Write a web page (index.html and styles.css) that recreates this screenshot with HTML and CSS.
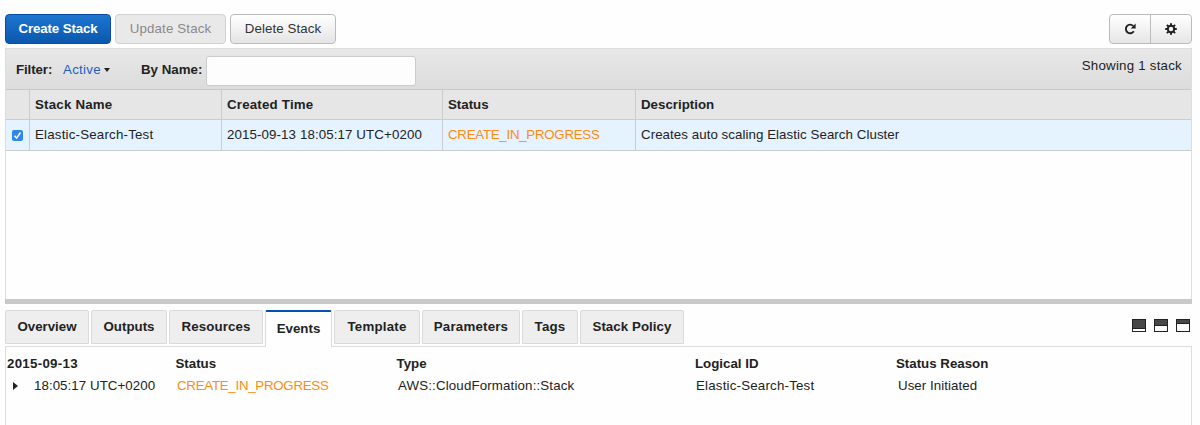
FILE: index.html
```html
<!DOCTYPE html>
<html lang="en">
<head>
<meta charset="utf-8">
<title>CloudFormation stacks</title>
<link rel="stylesheet" href="styles.css">
</head>
<body>
<main class="console">
  <header class="toolbar">
    <button class="btn primary">Create Stack</button>
    <button class="btn disabled">Update Stack</button>
    <button class="btn">Delete Stack</button>
    <div class="tools">
      <button class="tool" aria-label="Refresh"><svg width="14" height="14" viewBox="0 0 14 14"><path d="M10.2 3.9A4.3 4.3 0 1 0 10.8 9.3" fill="none" stroke="#222" stroke-width="1.9"/><path d="M12.6 1.6V6.4H7.7z" fill="#222"/></svg></button>
      <button class="tool" aria-label="Settings"><svg width="14" height="14" viewBox="0 0 14 14"><circle cx="7" cy="7" r="3.2" fill="none" stroke="#222" stroke-width="2"/><path d="M7 1.2V3.4M7 10.6v2.2M1.2 7h2.2M10.6 7h2.2M2.9 2.9l1.5 1.5M9.6 9.6l1.5 1.5M2.9 11.1l1.5-1.5M9.6 4.4l1.5-1.5" stroke="#222" stroke-width="2"/></svg></button>
    </div>
  </header>
  <section class="stacks">
    <div class="filter">
      <b class="filter-label">Filter:</b>
      <a class="active-link">Active</a><i class="caret"></i>
      <b class="name-label">By Name:</b>
      <input class="name-input" type="text" aria-label="By Name">
      <span class="count">Showing 1 stack</span>
    </div>
    <div class="row head">
      <div class="cell check"></div><div class="cell"><span class="wide">Stack Name</span></div><div class="cell"><span class="wide">Created Time</span></div><div class="cell"><span>Status</span></div><div class="cell"><span>Description</span></div>
    </div>
    <div class="row selected">
      <div class="cell check"><span class="checkbox"><svg width="11" height="11" viewBox="0 0 11 11"><path d="M2.5 5.8l2.1 2.3L8.5 2.5" fill="none" stroke="#fff" stroke-width="1.5"/></svg></span></div><div class="cell"><span class="t-name">Elastic-Search-Test</span></div><div class="cell"><span class="t-time">2015-09-13 18:05:17 UTC+0200</span></div><div class="cell"><span class="progress">CREATE_IN_PROGRESS</span></div><div class="cell"><span class="t-desc">Creates auto scaling Elastic Search Cluster</span></div>
    </div>
  </section>
  <div class="splitter"></div>
  <nav class="tabs">
    <a class="tab overview">Overview</a><a class="tab outputs">Outputs</a><a class="tab resources">Resources</a><a class="tab current">Events</a><a class="tab template">Template</a><a class="tab parameters">Parameters</a><a class="tab tags">Tags</a><a class="tab policy">Stack Policy</a>
    <div class="layouts"><i class="layout low"></i><i class="layout mid"></i><i class="layout high"></i></div>
  </nav>
  <section class="events">
    <div class="event event-head"><span class="date">2015-09-13</span><span>Status</span><span>Type</span><span>Logical ID</span><span>Status Reason</span></div>
    <div class="event event-item"><span class="when"><i class="expand"></i><span class="t-when">18:05:17 UTC+0200</span></span><span class="progress">CREATE_IN_PROGRESS</span><span class="t-type">AWS::CloudFormation::Stack</span><span class="t-name">Elastic-Search-Test</span><span class="t-when">User Initiated</span></div>
  </section>
</main>
</body>
</html>
```
FILE: styles.css
```css
* { box-sizing: border-box; }
body { margin: 0; background: #fefefe; color: #222; font: 13.3px/18px "Liberation Sans", Arial, sans-serif; overflow: hidden; }
.console { width: 1187px; height: 425px; margin-left: 5px; padding-top: 14px; display: flex; flex-direction: column; }
.toolbar { display: flex; gap: 4px; height: 34px; flex: none; }
.btn { width: 106px; height: 30px; padding: 0; border: 1px solid #bbb; border-radius: 4px; background: linear-gradient(#fff, #e4e4e4); color: #333; font: inherit; letter-spacing: .08px; white-space: nowrap; }
.btn.primary { border-color: #0b4aa5; background: linear-gradient(#1d76cf, #0b57ae); color: #fff; font-weight: bold; letter-spacing: -.12px; }
.btn.disabled { width: 111px; border-color: #d2d2d2; background: #e9e9e9; color: #8a8a8a; letter-spacing: .15px; }
.tools { display: flex; width: 83px; height: 30px; margin-left: auto; border: 1px solid #bbb; border-radius: 4px; background: linear-gradient(#fff, #e6e6e6); }
.tool { flex: 1; display: flex; align-items: center; justify-content: center; padding: 0; border: 0; background: none; }
.tool + .tool { border-left: 1px solid #bbb; }
.stacks { height: 251px; flex: none; border: solid #ddd; border-width: 1px 1px 0; }
.filter { display: flex; align-items: center; height: 41px; padding: 2px 9px 0 10px; border-bottom: 1px solid #c9c9c9; background: linear-gradient(#e8e8e8, #dcdcdc); }
.filter-label { width: 47px; letter-spacing: -.1px; }
.active-link { color: #1a5fc0; letter-spacing: .3px; }
.caret { margin: 0 31px 0 3px; border: solid transparent; border-width: 4px 3.5px 0; border-top-color: #222; }
.name-label { width: 65px; white-space: nowrap; }
.name-input { width: 210px; height: 30px; margin-top: 1px; border: 1px solid #ccc; border-radius: 3px; background: #fdfdfd; }
.count { margin: -8px 0 0 auto; letter-spacing: .23px; }
.row { display: grid; grid-template-columns: 24px 192px 221px 193px 1fr; }
.head { height: 30px; background: #e6e6e6; border-bottom: 1px solid #ccc; font-weight: bold; }
.selected { height: 31px; background: #e5f2ff; border-bottom: 1px solid #ccc; }
.cell { display: flex; align-items: center; padding-left: 5px; border-right: 1px solid #ccc; white-space: nowrap; }
.cell:last-child { border-right: 0; }
.wide { letter-spacing: .2px; }
.t-name { letter-spacing: .2px; }
.t-time { letter-spacing: .11px; }
.t-desc, .t-when { letter-spacing: .06px; }
.t-type { letter-spacing: .15px; }
.checkbox { display: flex; width: 11px; height: 11px; margin-left: 1px; border-radius: 2px; background: #2f87ee; }
.progress { color: #ff8c0d; letter-spacing: -.27px; }
.splitter { height: 5px; flex: none; background: #c9c9c9; }
.tabs { display: flex; gap: 2px; height: 43px; flex: none; padding-top: 6px; border-bottom: 1px solid #ddd; }
.tab { display: flex; align-items: center; justify-content: center; height: 34px; border: 1px solid #dadada; border-radius: 2px 2px 0 0; background: #eee; font-weight: bold; white-space: nowrap; }
.overview { width: 84px; }
.outputs { width: 76px; }
.resources { width: 94px; letter-spacing: .1px; }
.current { width: 67px; height: 37px; padding-bottom: 1px; border-top: 2px solid #0650b0; border-bottom: 0; background: #fefefe; }
.template { width: 86px; letter-spacing: .2px; }
.parameters { width: 98px; letter-spacing: .2px; }
.tags { width: 56px; letter-spacing: .2px; }
.policy { width: 104px; letter-spacing: .06px; }
.layouts { display: flex; gap: 8px; margin: 9px 2px 0 auto; }
.layout { width: 14px; height: 13px; border: 1px solid #222; background: #fff; }
.low { background: linear-gradient(#484848 8px, #222 8px 9px, #fff 9px); }
.mid { background: linear-gradient(#484848 5px, #222 5px 6px, #fff 6px); }
.high { background: linear-gradient(#484848 3px, #222 3px 4px, #fff 4px); }
.events { flex: 1; padding-top: 8px; border: solid #ddd; border-width: 0 1px; }
.event { display: grid; grid-template-columns: 168.5px 221px 298.5px 201px 1fr; height: 22px; padding-left: 1px; white-space: nowrap; }
.event-head { font-weight: bold; }
.date { letter-spacing: .28px; }
.event-item { grid-template-columns: 170px 221px 298px 202px 1fr; }
.when { display: flex; align-items: center; height: 18px; }
.expand { margin: 0 16px 0 6px; border: solid transparent; border-width: 4px 0 4px 5px; border-left-color: #222; }
```
